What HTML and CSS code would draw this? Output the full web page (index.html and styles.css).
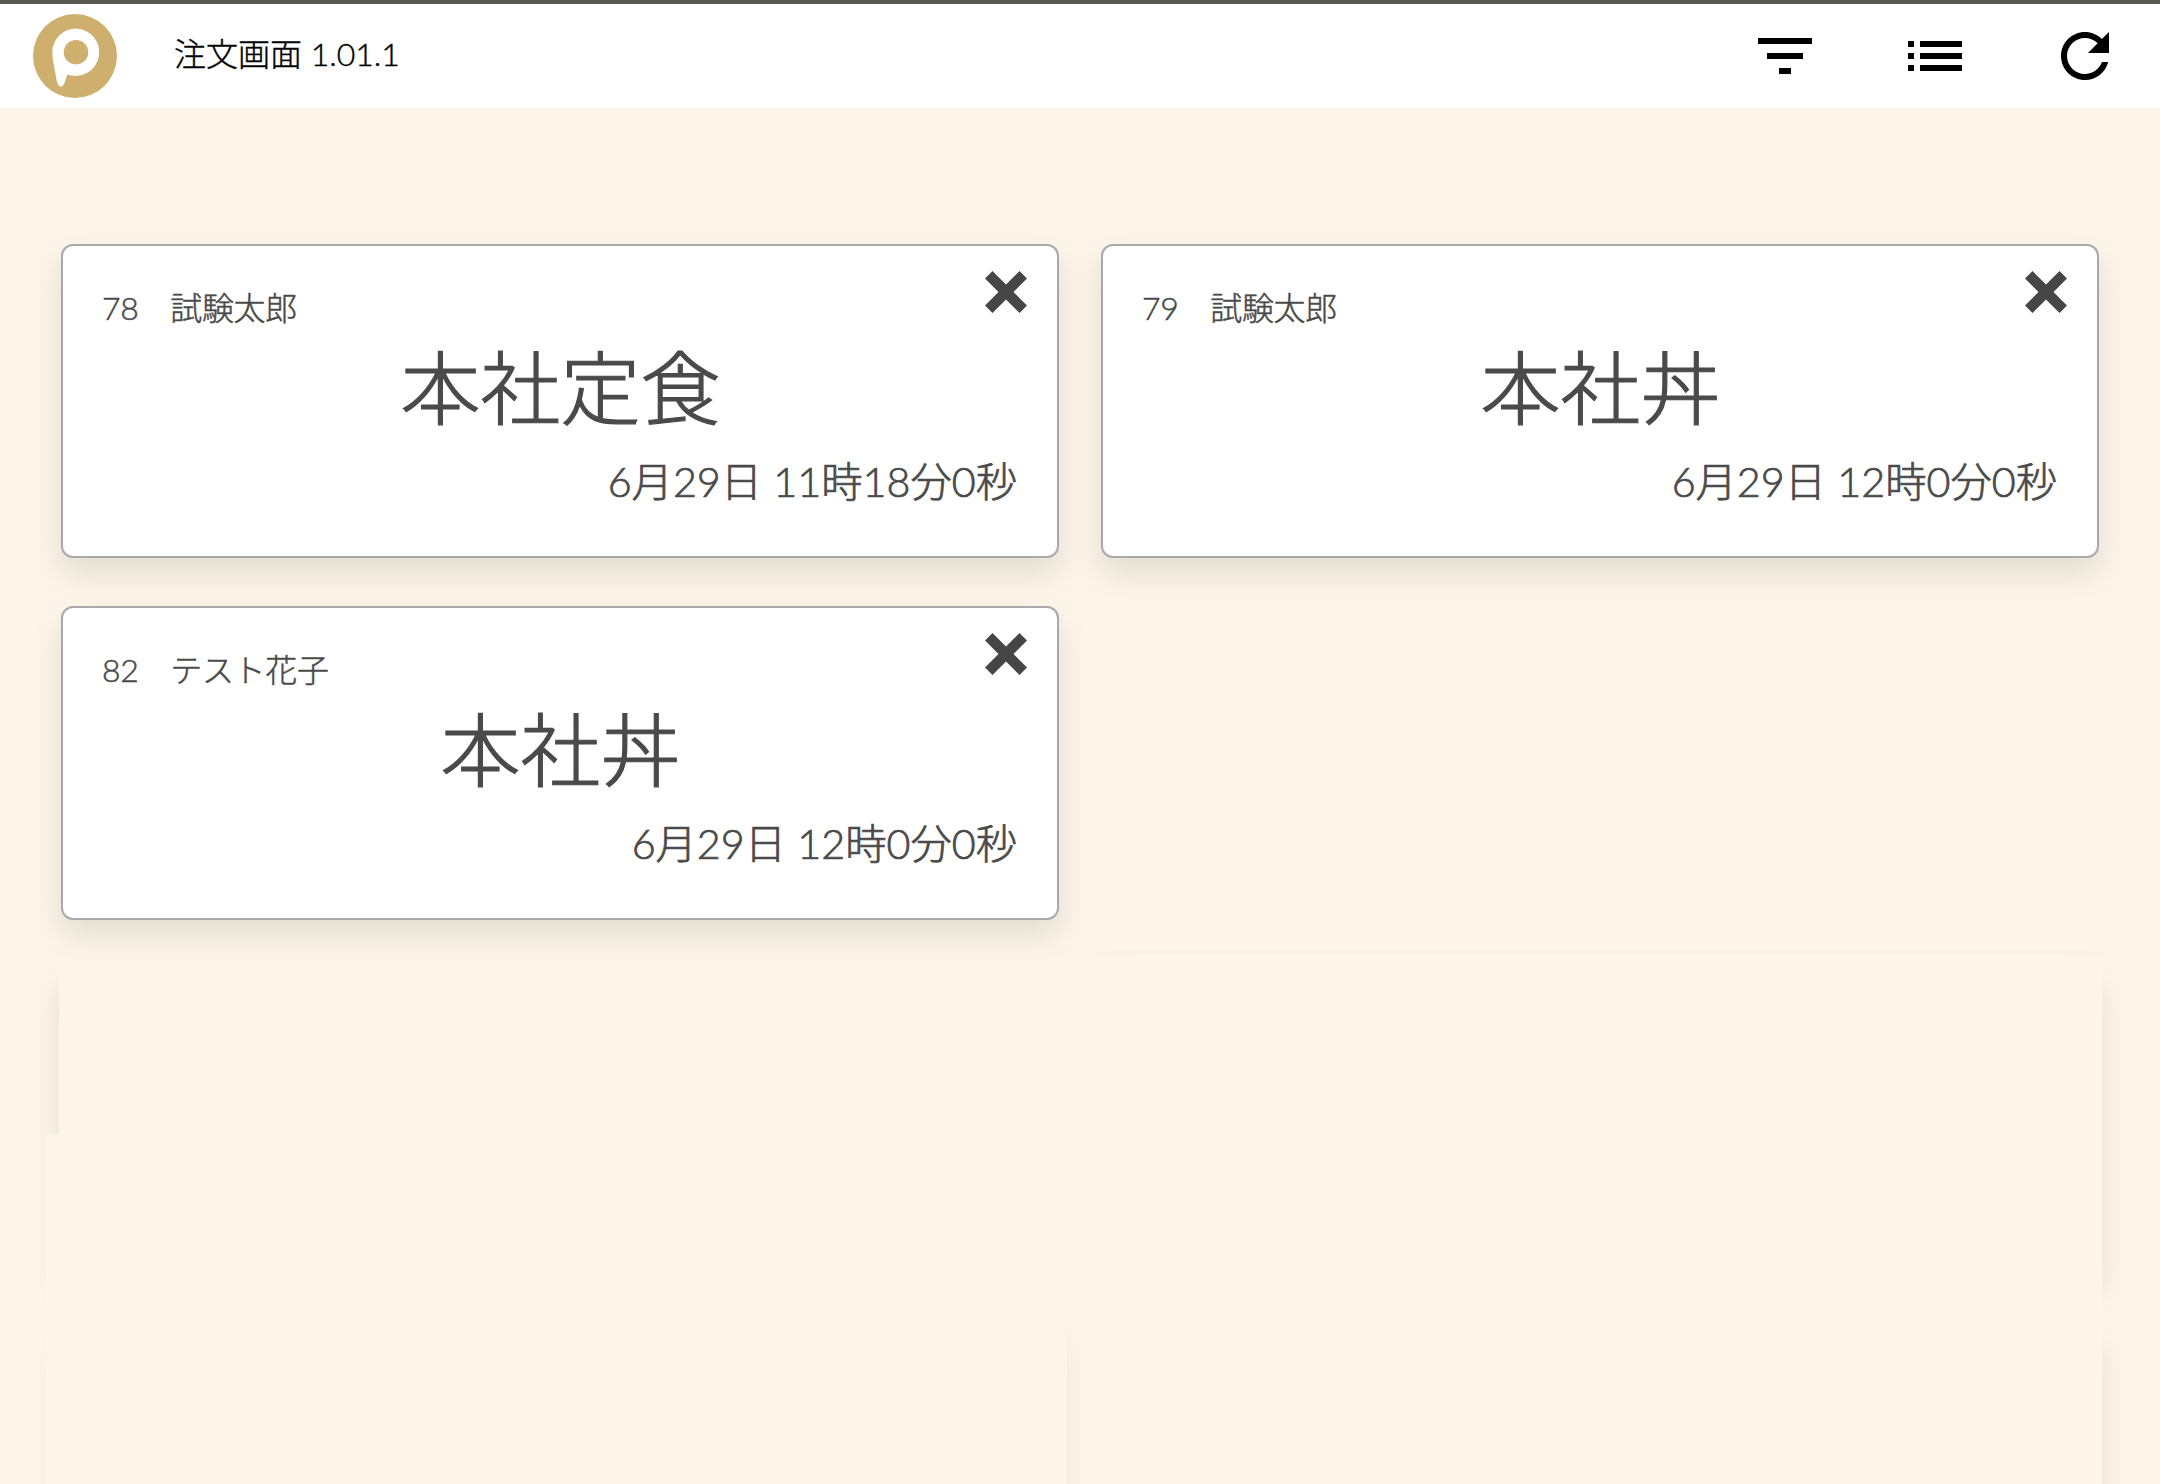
FILE: index.html
```html
<!DOCTYPE html>
<html lang="ja">
<head>
<meta charset="utf-8">
<title>注文画面</title>
<link rel="stylesheet" href="styles.css">
</head>
<body>
<header class="topbar">
  <svg class="logo" viewBox="0 0 84 84" aria-hidden="true">
    <circle cx="42" cy="42" r="42" fill="#ceaf6d"/>
    <path fill="#fff" d="M43 14.500a23.700 23.700 0 1 1-8.500 46C32.500 64.500 31.500 72.500 28 72.500c-4 0-4.500-7-5.500-12.500C21 51 19.300 44 19.300 38.200A23.700 23.700 0 0 1 43 14.500z"/>
    <circle cx="43" cy="38.200" r="12.200" fill="#ceaf6d"/>
  </svg>
  <h1 class="title">注文画面 1.01.1</h1>
  <nav class="actions">
    <svg class="action" viewBox="0 0 24 24"><path d="M10 18h4v-2h-4v2zM3 6v2h18V6H3zm3 7h12v-2H6v2z"/></svg>
    <svg class="action" viewBox="0 0 24 24"><path d="M3 13h2v-2H3v2zm0 4h2v-2H3v2zm0-8h2V7H3v2zm4 4h14v-2H7v2zm0 4h14v-2H7v2zM7 7v2h14V7H7z"/></svg>
    <svg class="action" viewBox="0 0 24 24"><path d="M17.650 6.350C16.200 4.900 14.210 4 12 4c-4.420 0-7.990 3.580-7.990 8s3.570 8 7.990 8c3.730 0 6.840-2.550 7.730-6h-2.080c-.820 2.330-3.040 4-5.650 4-3.310 0-6-2.690-6-6s2.690-6 6-6c1.660 0 3.140.690 4.220 1.780L13 11h7V4l-2.350 2.350z"/></svg>
  </nav>
</header>
<div class="trails" aria-hidden="true">
  <i class="trail"></i><i class="trail"></i>
  <i class="trail"></i><i class="trail"></i>
  <i class="trail"></i><i class="trail"></i>
  <i class="trail"></i><i class="trail"></i>
</div>
<main class="orders">
  <article class="card">
    <svg class="close" viewBox="0 0 42 42"><path d="M0 7.500 7.500 0 21 13.500 34.500 0 42 7.500 28.500 21 42 34.500 34.500 42 21 28.500 7.500 42 0 34.500 13.500 21z"/></svg>
    <p class="who">78　試験太郎</p>
    <h2 class="dish">本社定食</h2>
    <p class="time">6月29日 11時18分0秒</p>
  </article>
  <article class="card">
    <svg class="close" viewBox="0 0 42 42"><path d="M0 7.500 7.500 0 21 13.500 34.500 0 42 7.500 28.500 21 42 34.500 34.500 42 21 28.500 7.500 42 0 34.500 13.500 21z"/></svg>
    <p class="who">79　試験太郎</p>
    <h2 class="dish">本社丼</h2>
    <p class="time">6月29日 12時0分0秒</p>
  </article>
  <article class="card">
    <svg class="close" viewBox="0 0 42 42"><path d="M0 7.500 7.500 0 21 13.500 34.500 0 42 7.500 28.500 21 42 34.500 34.500 42 21 28.500 7.500 42 0 34.500 13.500 21z"/></svg>
    <p class="who">82　テスト花子</p>
    <h2 class="dish">本社丼</h2>
    <p class="time">6月29日 12時0分0秒</p>
  </article>
</main>
</body>
</html>
```
FILE: styles.css
```css
* { box-sizing: border-box; }

body {
  position: relative;
  height: 1484px;
  margin: 0;
  overflow: hidden;
  background: #fdf4ea;
  color: #4a4a4a;
  font-family: Lato, "Noto Sans CJK JP", sans-serif;
  font-weight: 300;
}

.topbar {
  display: flex;
  align-items: center;
  height: 108px;
  padding: 0 39px 0 33px;
  border-top: 4px solid #57564f;
  background: #fff;
  color: #000;
}

.logo { width: 84px; height: 84px; }

.title {
  margin: 0 0 4px 57px;
  font-size: 32px;
  font-weight: 300;
  line-height: 48px;
  -webkit-text-stroke: 0.4px currentColor;
}

.actions {
  display: flex;
  gap: 78px;
  margin-left: auto;
}

.action { width: 72px; height: 72px; }

.orders,
.trails {
  display: grid;
  grid-template-columns: repeat(2, 998px);
  grid-auto-rows: 314px;
  gap: 48px 42px;
  padding: 136px 61px 0;
}

.card,
.trail {
  border-radius: 12px;
  box-shadow: 0 15px 30px rgba(20, 50, 20, 0.115);
}

.card {
  position: relative;
  padding: 38px 40px 0 39px;
  border: 2px solid #a9a8aa;
  background: #fff;
}

.close {
  position: absolute;
  top: 25px;
  right: 30px;
  width: 42px;
  height: 42px;
  fill: #464646;
}

.who,
.dish,
.time { margin: 0; }

.who {
  font-size: 32px;
  line-height: 47px;
  letter-spacing: -0.3px;
  -webkit-text-stroke: 0.5px currentColor;
}

.dish {
  padding-left: 2px;
  font-size: 80px;
  font-weight: 300;
  line-height: 112px;
  text-align: center;
  -webkit-text-stroke: 1.2px currentColor;
}

.time {
  margin-top: 3px;
  font-size: 41.3px;
  line-height: 71px;
  text-align: right;
  -webkit-text-stroke: 0.7px currentColor;
}

/* Faint shadow remnants left around the empty slots */
.trails {
  position: absolute;
  inset: 108px 0 0;
  overflow: hidden;
  clip-path: path("M0 858H59V1027H46V1376H0Z M2102 858H2160V1376H2102Z M1067 1215H1080V1376H1067Z M1080 843H2110V847H1080Z");
}
```
